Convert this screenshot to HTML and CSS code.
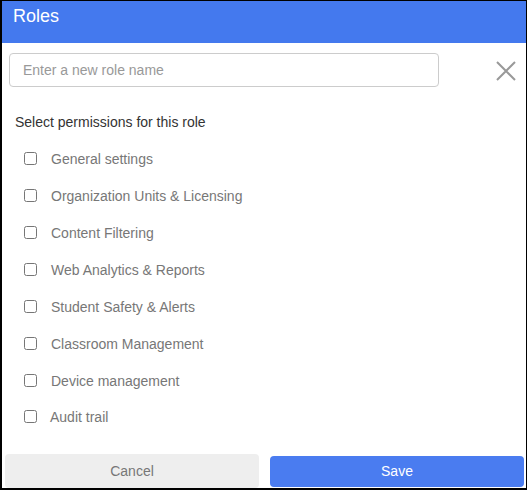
FILE: index.html
```html
<!DOCTYPE html>
<html>
<head>
<meta charset="utf-8">
<title>Roles</title>
<link rel="stylesheet" href="styles.css">
</head>
<body>
<div class="dialog">
  <div class="dialog-header">Roles</div>
  <div class="name-row">
    <input class="name-input" type="text" placeholder="Enter a new role name">
    <button class="close-btn" aria-label="Close">
      <svg width="20" height="20" viewBox="0 0 20 20"><path d="M1 1 L19 19 M19 1 L1 19" stroke="#999" stroke-width="2" fill="none"/></svg>
    </button>
  </div>
  <div class="perm-title">Select permissions for this role</div>
  <ul class="perm-list">
    <li class="perm-item"><input type="checkbox"><span class="perm-label">General settings</span></li>
    <li class="perm-item"><input type="checkbox"><span class="perm-label">Organization Units &amp; Licensing</span></li>
    <li class="perm-item"><input type="checkbox"><span class="perm-label">Content Filtering</span></li>
    <li class="perm-item"><input type="checkbox"><span class="perm-label">Web Analytics &amp; Reports</span></li>
    <li class="perm-item"><input type="checkbox"><span class="perm-label">Student Safety &amp; Alerts</span></li>
    <li class="perm-item"><input type="checkbox"><span class="perm-label">Classroom Management</span></li>
    <li class="perm-item"><input type="checkbox"><span class="perm-label">Device management</span></li>
    <li class="perm-item perm-item--last"><input type="checkbox"><span class="perm-label">Audit trail</span></li>
  </ul>
  <div class="dialog-footer">
    <button class="btn btn-cancel">Cancel</button>
    <button class="btn btn-save">Save</button>
  </div>
</div>
</body>
</html>
```
FILE: styles.css
```css
html, body {
  margin: 0;
  padding: 0;
  background: #fff;
}
body {
  font-family: "Liberation Sans", Arial, sans-serif;
  font-size: 14px;
}
.dialog {
  box-sizing: border-box;
  width: 527px;
  height: 490px;
  border-style: solid;
  border-color: #000;
  border-width: 1px 1px 2px 2px;
  display: flex;
  flex-direction: column;
  background: #fff;
}
.dialog-header {
  box-sizing: border-box;
  height: 42px;
  background: #4479ee;
  color: #fff;
  font-size: 18px;
  line-height: 22px;
  padding: 4px 0 0 11px;
}
.name-row {
  display: flex;
  align-items: center;
  margin-top: 10px;
  padding-left: 7px;
}
.name-input {
  box-sizing: border-box;
  width: 430px;
  height: 34px;
  border: 1px solid #ccc;
  border-radius: 4px;
  padding: 0 13px;
  font-family: "Liberation Sans", Arial, sans-serif;
  font-size: 14px;
  color: #555;
  outline: none;
}
.name-input::placeholder {
  color: #999;
}
.close-btn {
  margin-left: 57px;
  margin-top: 2px;
  padding: 0;
  border: 0;
  background: none;
  width: 20px;
  height: 20px;
  display: flex;
}
.perm-title {
  margin-top: 27px;
  padding-left: 13px;
  line-height: 16px;
  color: #333;
}
.perm-list {
  list-style: none;
  margin: 10px 0 0 0;
  padding: 0 0 0 22px;
}
.perm-item {
  height: 37px;
  display: flex;
  align-items: center;
  gap: 14px;
  color: #777;
}
.perm-item input {
  margin: 0;
  width: 13px;
  height: 13px;
}
.perm-item--last {
  gap: 13px;
  margin-top: -1px;
}
.dialog-footer {
  margin-top: auto;
  display: flex;
  align-items: center;
  gap: 11px;
  padding: 0 2px 0 3px;
  height: 34px;
}
.btn {
  flex: 1;
  border: 0;
  border-radius: 4px;
  font-family: "Liberation Sans", Arial, sans-serif;
  font-size: 14px;
  cursor: pointer;
}
.btn-cancel {
  height: 34px;
  background: #eeeeee;
  color: #777;
}
.btn-save {
  height: 31px;
  background: #4a7cf0;
  color: #fff;
}
```
